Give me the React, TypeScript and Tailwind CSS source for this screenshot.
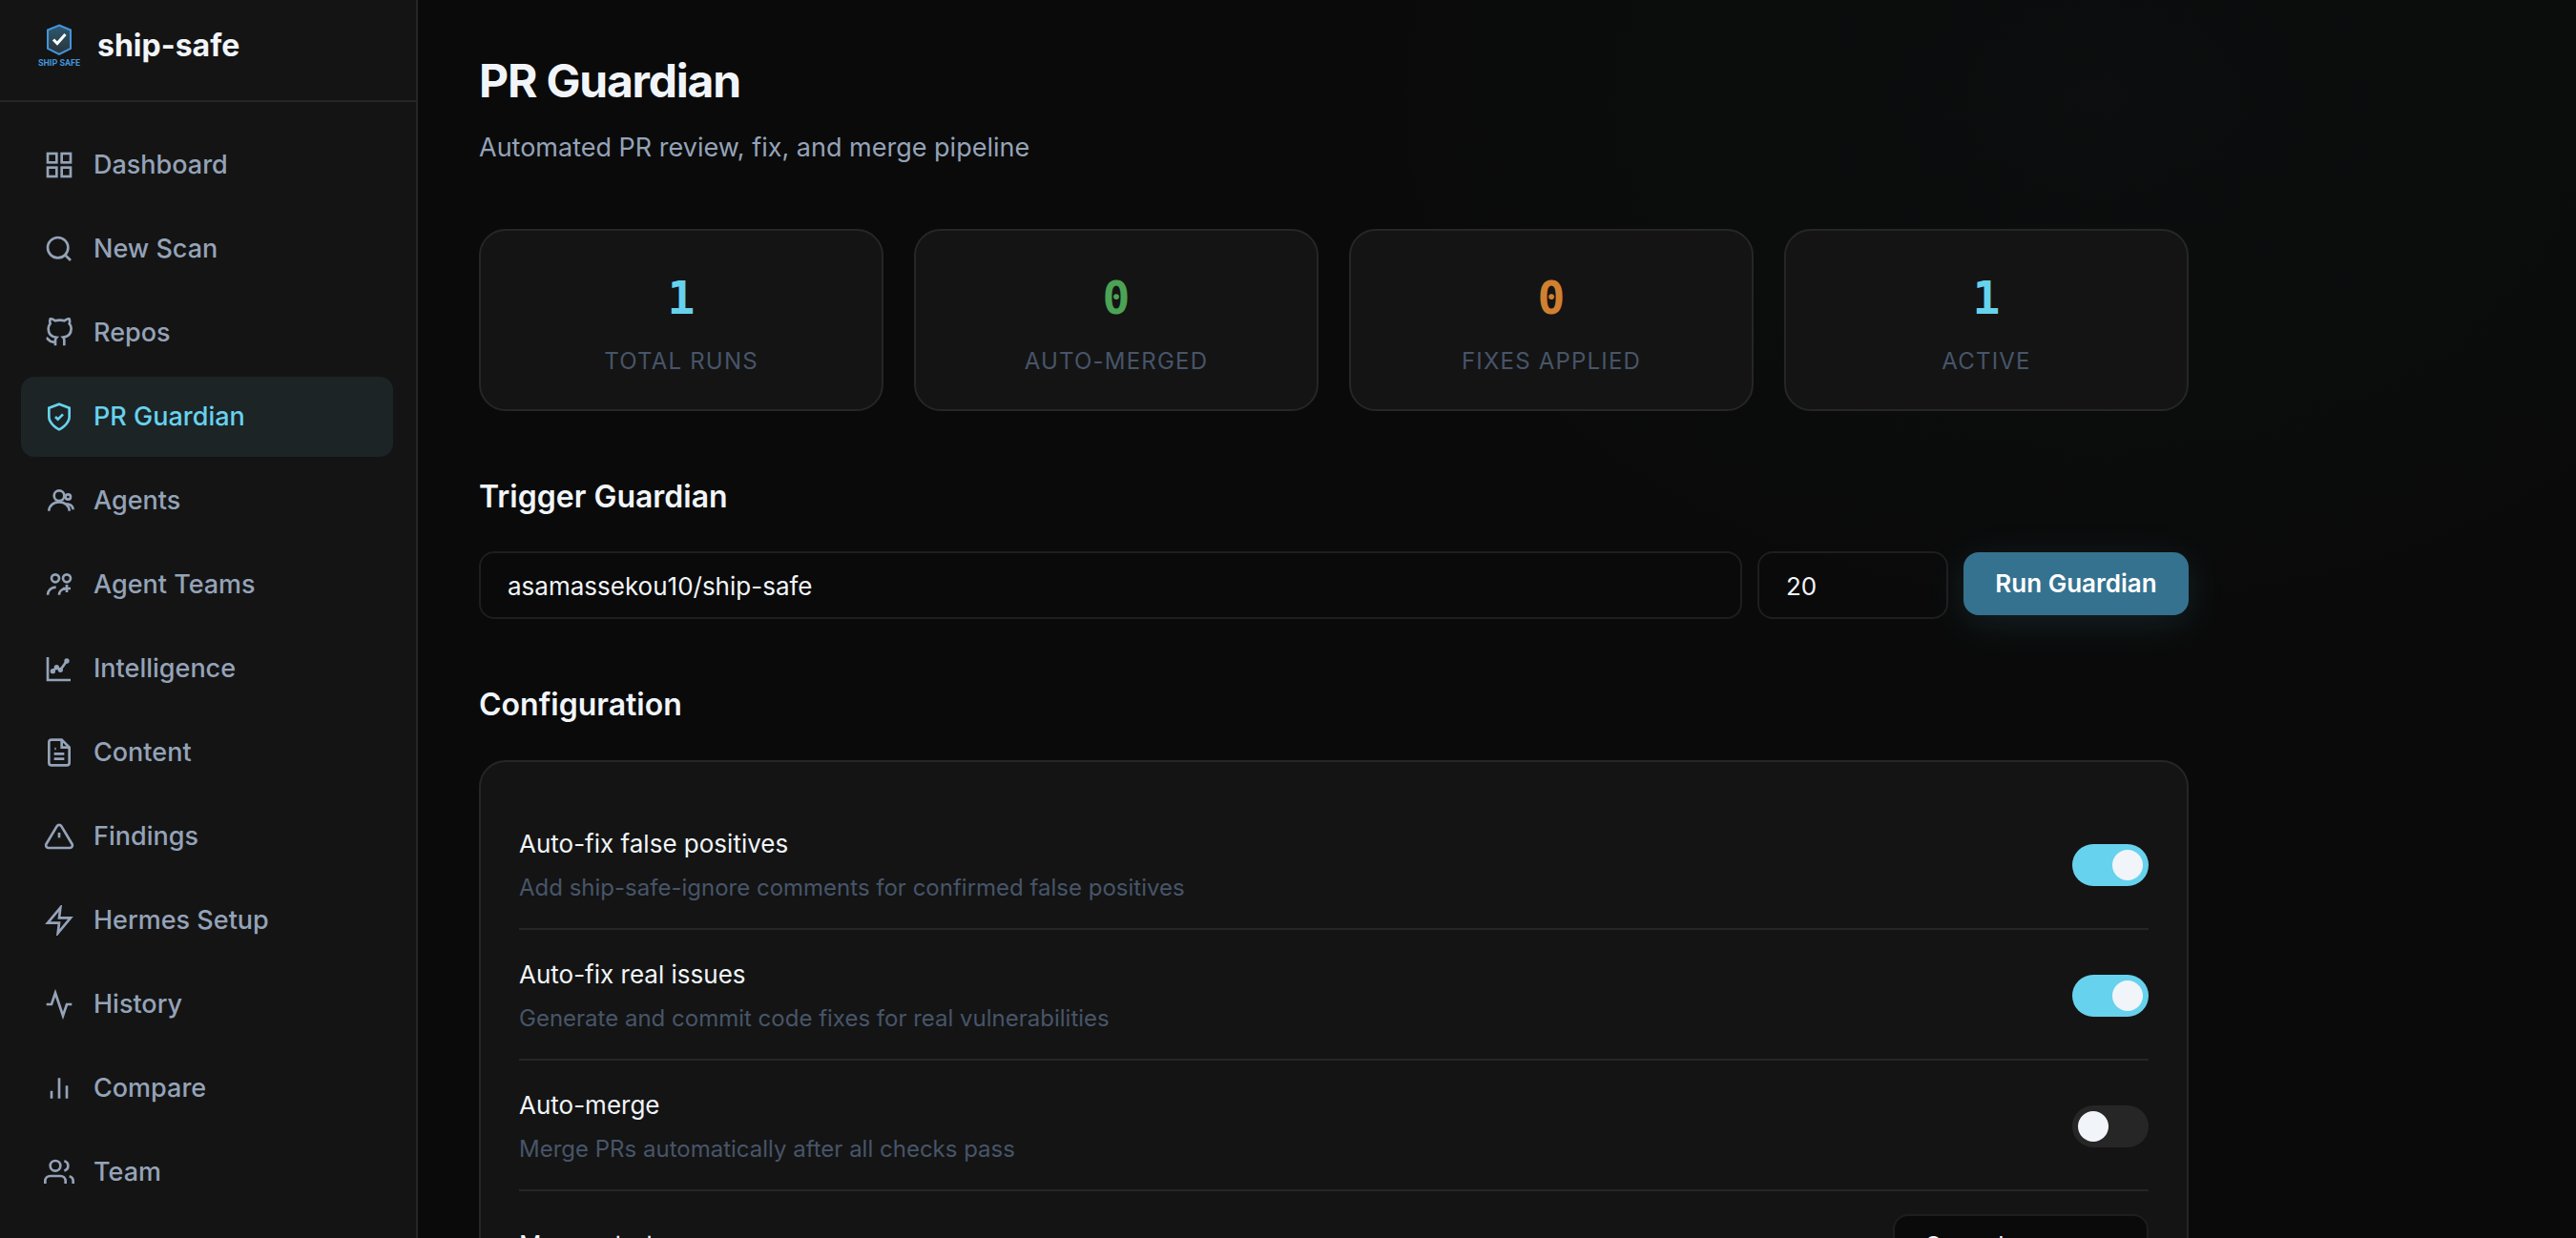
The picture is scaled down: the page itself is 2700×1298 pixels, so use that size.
import { useState } from 'react'
import type { ReactNode } from 'react'

interface NavItem {
  label: string
  icon: ReactNode
}

const NAV_ITEMS: NavItem[] = [
  {
    label: 'Dashboard',
    icon: (
      <>
        <rect x="3" y="3" width="7" height="7" />
        <rect x="14" y="3" width="7" height="7" />
        <rect x="14" y="14" width="7" height="7" />
        <rect x="3" y="14" width="7" height="7" />
      </>
    ),
  },
  {
    label: 'New Scan',
    icon: (
      <>
        <circle cx="11" cy="11" r="8" />
        <path d="M21 21l-4.35-4.35" />
      </>
    ),
  },
  {
    label: 'Repos',
    icon: (
      <path d="M9 19c-5 1.5-5-2.5-7-3m14 6v-3.87a3.37 3.37 0 0 0-.94-2.61c3.14-.35 6.44-1.54 6.44-7A5.44 5.44 0 0 0 20 4.77 5.07 5.07 0 0 0 19.91 1S18.73.65 16 2.48a13.38 13.38 0 0 0-7 0C6.27.65 5.09 1 5.09 1A5.07 5.07 0 0 0 5 4.77a5.44 5.44 0 0 0-1.5 3.78c0 5.42 3.3 6.61 6.44 7A3.37 3.37 0 0 0 9 18.13V22" />
    ),
  },
  {
    label: 'PR Guardian',
    icon: (
      <>
        <path d="M12 22s8-4 8-10V5l-8-3-8 3v7c0 6 8 10 8 10z" />
        <path d="M9 12l2 2 4-4" />
      </>
    ),
  },
  {
    label: 'Agents',
    icon: (
      <>
        <circle cx="12" cy="8" r="4" />
        <path d="M4 20c0-3.9 3.6-7 8-7s8 3.1 8 7" />
        <circle cx="19" cy="9" r="2" />
        <path d="M17.5 14.5c3 0 5.5 1.5 5.5 4.5" />
      </>
    ),
  },
  {
    label: 'Agent Teams',
    icon: (
      <>
        <circle cx="9" cy="7" r="3" />
        <circle cx="18" cy="7" r="3" />
        <path d="M3 20c0-3.3 2.7-6 6.5-6" />
        <path d="M12 20c0-2.8 2.2-4.7 5-4.7" />
        <path d="M18 12v6M15 15h6" />
      </>
    ),
  },
  {
    label: 'Intelligence',
    icon: (
      <>
        <path d="M3 3v18h18" />
        <path d="M7 14l3-3 3 2 5-7" />
        <circle cx="7" cy="14" r="1" />
        <circle cx="10" cy="11" r="1" />
        <circle cx="13" cy="13" r="1" />
        <circle cx="18" cy="6" r="1" />
      </>
    ),
  },
  {
    label: 'Content',
    icon: (
      <>
        <path d="M14 2H6a2 2 0 0 0-2 2v16a2 2 0 0 0 2 2h12a2 2 0 0 0 2-2V8z" />
        <path d="M14 2v6h6M16 13H8M16 17H8M9.5 9h-1" />
      </>
    ),
  },
  {
    label: 'Findings',
    icon: (
      <>
        <path d="M10.29 3.86L1.82 18a2 2 0 0 0 1.71 3h16.94a2 2 0 0 0 1.71-3L13.71 3.86a2 2 0 0 0-3.42 0z" />
        <path d="M12 9v4" />
      </>
    ),
  },
  { label: 'Hermes Setup', icon: <path d="M13 2L3 14h9l-1 8 10-12h-9l1-8z" /> },
  { label: 'History', icon: <path d="M22 12h-4l-3 9L9 3l-3 9H2" /> },
  { label: 'Compare', icon: <path d="M18 20V10M12 20V4M6 20v-6" /> },
  {
    label: 'Team',
    icon: (
      <>
        <path d="M17 21v-2a4 4 0 0 0-4-4H5a4 4 0 0 0-4 4v2" />
        <circle cx="9" cy="7" r="4" />
        <path d="M23 21v-2a4 4 0 0 0-3-3.87M16 3.13a4 4 0 0 1 0 7.75" />
      </>
    ),
  },
]

const STATS = [
  { label: 'Total runs', value: 1, color: 'text-[#67d2ed]' },
  { label: 'Auto-merged', value: 0, color: 'text-[#4ca355]' },
  { label: 'Fixes applied', value: 0, color: 'text-[#d08030]' },
  { label: 'Active', value: 1, color: 'text-[#67d2ed]' },
]

const TOGGLES = [
  { id: 'fix-false-positives', title: 'Auto-fix false positives', description: 'Add ship-safe-ignore comments for confirmed false positives', on: true },
  { id: 'fix-real-issues', title: 'Auto-fix real issues', description: 'Generate and commit code fixes for real vulnerabilities', on: true },
  { id: 'auto-merge', title: 'Auto-merge', description: 'Merge PRs automatically after all checks pass', on: false },
]

function Logo() {
  return (
    <svg className="w-[46px] h-[46px] shrink-0" viewBox="0 0 46 46" fill="none">
      <defs>
        <linearGradient id="shield" x1="0" y1="0" x2="0" y2="1">
          <stop offset="0" stopColor="#2c5a72" />
          <stop offset="1" stopColor="#2b3238" />
        </linearGradient>
      </defs>
      <path d="M22 1.5L34 6.5V26L22 32L10 26V6.5Z" fill="url(#shield)" stroke="#4296dc" strokeWidth="2" />
      <path d="M16 16.5l4 4 8.5-9.5" stroke="#ffffff" strokeWidth="3" />
      <text x="22" y="44" textAnchor="middle" fill="#4296dc" className="font-[Roboto,sans-serif] text-[9px] font-bold">
        SHIP SAFE
      </text>
    </svg>
  )
}

function Sidebar() {
  return (
    <aside className="w-[438px] shrink-0 bg-[#141414] border-r-2 border-[#262626]">
      <div className="flex items-center gap-4 pl-10 pt-6 pb-[33px] border-b-2 border-[#262626]">
        <Logo />
        <span className="text-[32px] leading-[48px] font-bold">ship-safe</span>
      </div>
      <nav className="flex flex-col gap-1 pt-6 pl-[22px] pr-6">
        {NAV_ITEMS.map(item => (
          <a
            key={item.label}
            href="#"
            className={`flex items-center gap-5 px-6 py-5 rounded-[14px] text-[27px] leading-[44px] font-medium ${
              item.label === 'PR Guardian' ? 'bg-[#1c2426] text-[#67d2ed]' : 'text-[#94a3b8]'
            }`}
          >
            <svg className="w-8 h-8 shrink-0" viewBox="0 0 24 24" fill="none" stroke="currentColor" strokeWidth="2">
              {item.icon}
            </svg>
            {item.label}
          </a>
        ))}
      </nav>
    </aside>
  )
}

interface ToggleRowProps {
  id: string
  title: string
  description: string
  on: boolean
}

function ToggleRow({ id, title, description, on }: ToggleRowProps) {
  const [checked, setChecked] = useState(on)

  return (
    <div className="flex items-center justify-between pt-[25px] pb-[23px] border-b-2 border-[#262626]">
      <label htmlFor={id}>
        <span className="block text-[26px] leading-[44px]">{title}</span>
        <span className="block mt-1 text-[24px] leading-[39px] text-[#475569]">{description}</span>
      </label>
      <input
        id={id}
        type="checkbox"
        role="switch"
        checked={checked}
        onChange={e => setChecked(e.target.checked)}
        className="appearance-none flex items-center w-20 h-11 px-1.5 shrink-0 rounded-full bg-[#262626] checked:bg-[#67d2ed] checked:justify-end before:block before:size-8 before:rounded-full before:bg-[#f1f5f9]"
      />
    </div>
  )
}

export default function App() {
  const [repo, setRepo] = useState('asamassekou10/ship-safe')
  const [prNumber, setPrNumber] = useState('20')
  const [strategy, setStrategy] = useState('squash')

  return (
    <div className="flex h-screen overflow-hidden bg-[#0a0a0a] text-[#f1f5f9] font-[Inter,sans-serif]">
      <Sidebar />
      <main className="flex-1 min-w-0 px-16 pt-[57px] overflow-hidden bg-[radial-gradient(ellipse_36%_45%_at_78%_8%,rgba(103,210,237,0.02),transparent)]">
        <div className="max-w-[1792px]">
          <h1 className="text-[48px] leading-[56px] font-bold tracking-tight">PR Guardian</h1>
          <p className="mt-5 text-[27px] leading-[44px] text-[#94a3b8]">Automated PR review, fix, and merge pipeline</p>

          <div className="grid grid-cols-4 gap-8 mt-[63px]">
            {STATS.map(stat => (
              <div key={stat.label} className="pt-10 pb-[30px] text-center bg-[#141414] border-2 border-[#262626] rounded-[28px]">
                <div className={`font-['DejaVu_Sans_Mono',monospace] text-[48px] leading-[60px] font-bold ${stat.color}`}>{stat.value}</div>
                <div className="mt-[17px] text-[24px] leading-[40px] uppercase tracking-wider text-[#475569]">{stat.label}</div>
              </div>
            ))}
          </div>

          <section className="mt-17">
            <h2 className="text-[32px] leading-[44px] font-semibold">Trigger Guardian</h2>
            <form className="flex items-start gap-4 mt-[35px]" onSubmit={e => e.preventDefault()}>
              <input
                type="text"
                aria-label="Repository"
                value={repo}
                onChange={e => setRepo(e.target.value)}
                className="flex-1 min-w-0 h-[71px] px-7 pt-0.5 text-[26px] bg-[#0a0a0a] border-2 border-[#1e1e1e] rounded-[16px]"
              />
              <input
                type="text"
                aria-label="PR number"
                value={prNumber}
                onChange={e => setPrNumber(e.target.value)}
                className="w-[200px] h-[71px] px-7 pt-0.5 text-[26px] border-2 border-[#1e1e1e] rounded-[16px]"
              />
              <button
                type="submit"
                className="w-[236px] h-[66px] mt-px pb-0.5 rounded-[16px] bg-[#35728f] text-white text-[26px] font-semibold shadow-[0_8px_40px_rgba(103,210,237,0.12)]"
              >
                Run Guardian
              </button>
            </form>
          </section>

          <section className="mt-17">
            <h2 className="text-[32px] leading-[44px] font-semibold">Configuration</h2>
            <div className="mt-9 px-10 pt-[39px] pb-10 bg-[#141414] border-2 border-[#262626] rounded-[28px]">
              {TOGGLES.map(toggle => (
                <ToggleRow key={toggle.id} {...toggle} />
              ))}
              <div className="flex items-center justify-between py-6">
                <label htmlFor="merge-strategy" className="text-[26px] leading-[44px]">Merge strategy</label>
                <select
                  id="merge-strategy"
                  value={strategy}
                  onChange={e => setStrategy(e.target.value)}
                  className="appearance-none w-[268px] h-16 px-8 text-[26px] bg-[#0a0a0a] border-2 border-[#1e1e1e] rounded-[16px]"
                >
                  <option value="squash">Squash</option>
                  <option value="merge">Merge</option>
                  <option value="rebase">Rebase</option>
                </select>
              </div>
            </div>
          </section>
        </div>
      </main>
    </div>
  )
}
